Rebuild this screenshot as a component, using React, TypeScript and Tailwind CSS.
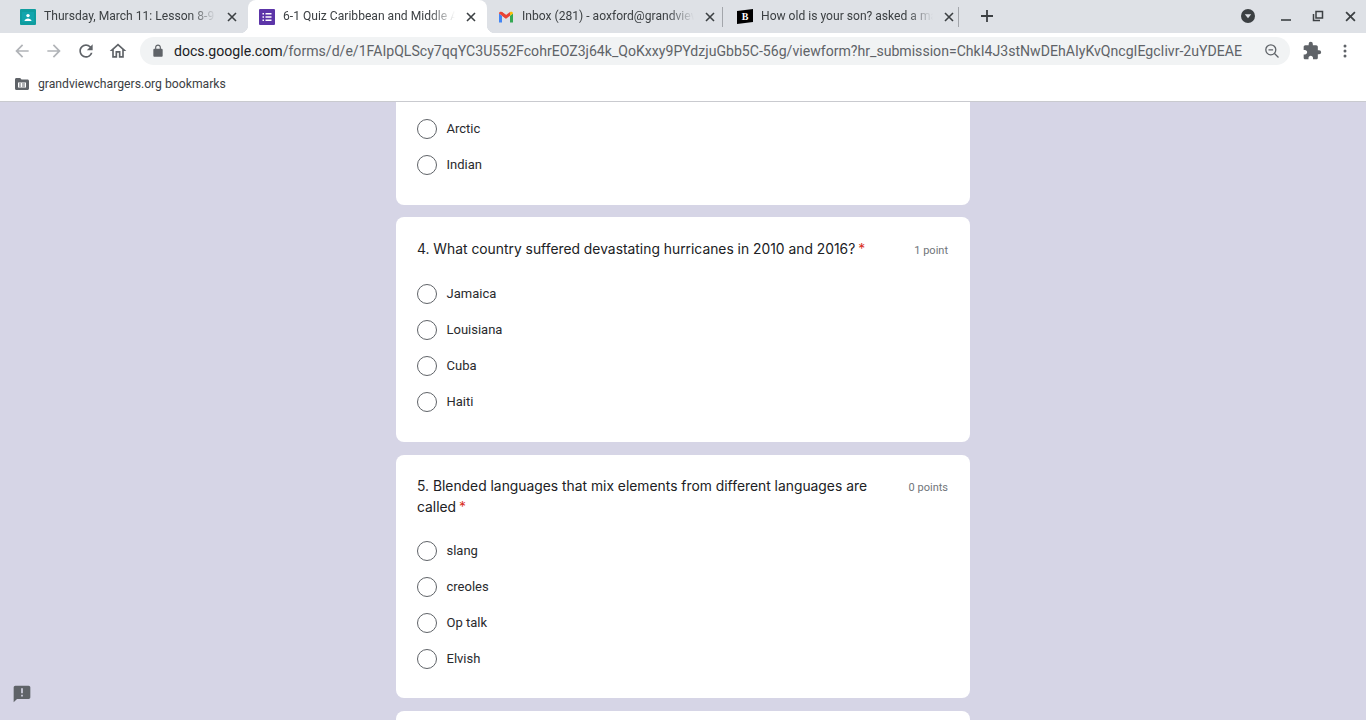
import React from "react";

const tabs = [
  { title: "Thursday, March 11: Lesson 8-9 Review", width: "w-[240px]", icon: "classroom", active: false, pl: "pl-3", sep: false },
  { title: "6-1 Quiz Caribbean and Middle America", width: "w-[239px]", icon: "forms", active: true, pl: "pl-[11px]", sep: false },
  { title: "Inbox (281) - aoxford@grandviewchargers.org", width: "w-[235px]", icon: "gmail", active: false, pl: "pl-[11px]", sep: true },
  { title: "How old is your son? asked a man at the", width: "w-[235px]", icon: "b", active: false, pl: "pl-[14px]", sep: true },
];

const TabIcon = ({ kind }: { kind: string }) => {
  if (kind === "classroom") {
    return (
      <svg width="16" height="16" viewBox="0 0 16 16" className="shrink-0">
        <rect width="16" height="16" rx="1" fill="#0f9d9f" />
        <rect x="2" y="3" width="12" height="10" fill="#12a5ad" />
        <circle cx="8" cy="6.6" r="1.7" fill="#fff" />
        <path d="M4.5 12c0-1.8 2-2.6 3.5-2.6s3.500.8 3.500 2.600z" fill="#fff" />
      </svg>
    );
  }
  if (kind === "forms") {
    return (
      <svg width="16" height="16" viewBox="0 0 16 16" className="shrink-0">
        <rect width="16" height="16" rx="1" fill="#5c35a8" />
        <path d="M3.500 4h1.500v1.500H3.500zM6.500 4h6v1.500h-6zM3.500 7.200h1.500v1.500H3.500zM6.500 7.200h6v1.500h-6zM3.500 10.400h1.500v1.500H3.500zM6.500 10.400h6v1.500h-6z" fill="#fff" />
      </svg>
    );
  }
  if (kind === "gmail") {
    return (
      <svg width="16" height="16" viewBox="0 0 16 16" className="shrink-0">
        <path d="M1 13.500V4.500l3 2.200v6.800z" fill="#4285f4" />
        <path d="M12 13.500V6.700l3-2.200v9z" fill="#34a853" />
        <path d="M1 4.500C1 2.800 2.800 2.200 4 3.100L8 6.100v3.300L1 4.500z" fill="#ea4335" />
        <path d="M4 3.100l4 3 4-3v3.600L8 9.700 4 6.700z" fill="#ea4335" />
        <path d="M12 3.100c1.200-.9 3-.3 3 1.400l-3 2.200z" fill="#fbbc04" />
      </svg>
    );
  }
  return (
    <span className="flex h-[15px] w-4 shrink-0 items-center justify-center bg-black font-['Liberation_Serif',serif] text-[10px] font-bold leading-none text-white [clip-path:polygon(0_14%,100%_0,100%_86%,0_100%)]">
      B
    </span>
  );
};

const CloseIcon = ({ size = 10 }: { size?: number }) => (
  <svg width={size} height={size} viewBox="0 0 10 10" className="shrink-0">
    <path d="M1 1l8 8M9 1l-8 8" stroke="#3c4043" strokeWidth="1.600" fill="none" />
  </svg>
);

const ChromeIcon = ({ d, color = "#5f6368", size = 20 }: { d: string; color?: string; size?: number }) => (
  <svg width={size} height={size} viewBox="0 0 24 24" fill={color} className="shrink-0">
    <path d={d} />
  </svg>
);

const Radio = () => (
  <span className="h-5 w-5 shrink-0 rounded-full border-[1.5px] border-[#5f6368]" />
);

const Option = ({ label }: { label: string }) => (
  <div className="flex h-9 items-center gap-[9.5px]">
    <Radio />
    <span className="text-[13px] text-[#292a2d]">{label}</span>
  </div>
);

const Question = ({ title, points }: { title: React.ReactNode; points: string }) => (
  <div className="flex items-start justify-between">
    <div className="w-[460px] font-['Inter',sans-serif] text-[13.85px] leading-[21px] text-[#202124]">{title}</div>
    <div className="pt-px text-[11px] leading-[21px] text-[#70757a]">{points}</div>
  </div>
);

const Star = () => <span className="ml-[3px] text-[#d93025]">*</span>;

export default function App() {
  return (
    <div className="relative flex h-screen w-full flex-col overflow-hidden bg-[#d6d5e6] font-['Roboto',sans-serif]">
      {/* Tab strip */}
      <div className="flex h-[33px] shrink-0 items-center bg-[#dee1e6] pl-2">
        {tabs.map((tab) => (
          <React.Fragment key={tab.title}>
            <div
              className={`relative flex h-full items-center gap-2 ${tab.width} ${tab.pl} ${
                tab.active ? "rounded-t-lg bg-white" : ""
              }`}
            >
              {tab.active && (
                <>
                  <span className="absolute bottom-0 left-[-8px] h-2 w-2 bg-[radial-gradient(circle_at_0_0,transparent_8px,#fff_8.500px)]" />
                  <span className="absolute bottom-0 right-[-8px] h-2 w-2 bg-[radial-gradient(circle_at_100%_0,transparent_8px,#fff_8.500px)]" />
                </>
              )}
              <TabIcon kind={tab.icon} />
              <div className="w-[172px] overflow-hidden whitespace-nowrap text-[12.1px] text-[#3c4043] [mask-image:linear-gradient(to_right,#000_85%,transparent)]">
                {tab.title}
              </div>
              <span className="ml-[3px]">
                <CloseIcon />
              </span>
            </div>
            {tab.sep && <span className="h-5 w-px shrink-0 bg-[#a3a6ab]" />}
          </React.Fragment>
        ))}
        <div className="ml-[21px] flex h-full items-center pb-px">
          <svg width="14" height="14" viewBox="0 0 14 14">
            <path d="M7 1v12M1 7h12" stroke="#3c4043" strokeWidth="1.800" />
          </svg>
        </div>
        <div className="ml-auto flex h-full items-center pb-px pr-[10px]">
          <svg width="16" height="16" viewBox="0 0 16 16" className="mr-[24px]">
            <circle cx="8" cy="8" r="7" fill="#3c4043" />
            <path d="M4.800 6.200h6.400L8 10.200z" fill="#dee1e6" />
          </svg>
          <svg width="12" height="12" viewBox="0 0 12 12" className="mr-[20px]">
            <path d="M1 10h10" stroke="#3c4043" strokeWidth="1.600" />
          </svg>
          <svg width="12" height="12" viewBox="0 0 12 12" className="mr-[21px]">
            <path d="M4 1.500h6.500V8H4zM1.500 4v6.500H8" stroke="#3c4043" strokeWidth="1.500" fill="none" />
          </svg>
          <CloseIcon size={11} />
        </div>
      </div>

      {/* Toolbar */}
      <div className="flex h-[36px] shrink-0 items-center bg-white pl-3">
        <div className="flex items-center gap-3">
          <ChromeIcon color="#b1b4b8" d="M20 11H7.830l5.590-5.590L12 4l-8 8 8 8 1.410-1.410L7.830 13H20v-2z" />
          <ChromeIcon color="#b1b4b8" d="M12 4l-1.410 1.410L16.170 11H4v2h12.170l-5.580 5.590L12 20l8-8z" />
          <ChromeIcon d="M17.650 6.350A7.958 7.958 0 0 0 12 4c-4.420 0-7.990 3.580-7.990 8s3.570 8 7.990 8c3.730 0 6.840-2.550 7.730-6h-2.080A5.990 5.990 0 0 1 12 18c-3.310 0-6-2.690-6-6s2.690-6 6-6c1.660 0 3.140.69 4.220 1.780L13 11h7V4l-2.350 2.350z" />
          <ChromeIcon d="M12 5.690l5 4.500V18h-2v-6H9v6H7v-7.810l5-4.500M12 3L2 12h3v8h6v-6h2v6h6v-8h3L12 3z" />
        </div>
        <div className="ml-[12px] flex h-[28px] w-[1150px] items-center rounded-full bg-[#f1f3f4] pl-[11px] pr-[10px]">
          <ChromeIcon size={14} d="M18 8h-1V6c0-2.760-2.240-5-5-5S7 3.240 7 6v2H6c-1.100 0-2 .9-2 2v10c0 1.100.9 2 2 2h12c1.100 0 2-.9 2-2V10c0-1.100-.9-2-2-2zM9 6c0-1.660 1.340-3 3-3s3 1.340 3 3v2H9V6z" />
          <span className="ml-[9px] whitespace-nowrap pt-px text-[14.1px] text-[#5f6368]">
            <span className="text-[#202124]">docs.google.com</span>
            /forms/d/e/1FAIpQLScy7qqYC3U552FcohrEOZ3j64k_QoKxxy9PYdzjuGbb5C-56g/viewform?hr_submission=ChkI4J3stNwDEhAIyKvQncgIEgcIivr-2uYDEAE
          </span>
          <svg width="16" height="16" viewBox="0 0 16 16" className="ml-auto shrink-0" fill="none" stroke="#5f6368" strokeWidth="1.300">
            <circle cx="6.800" cy="6.800" r="5" />
            <path d="M10.500 10.500l4 4M4.500 6.800h4.600" />
          </svg>
        </div>
        <div className="ml-[12px]">
          <ChromeIcon d="M20.500 11H19V7c0-1.100-.9-2-2-2h-4V3.500a2.500 2.500 0 0 0-5 0V5H4c-1.100 0-1.990.9-1.990 2v3.800H3.500c1.490 0 2.700 1.210 2.700 2.700s-1.210 2.700-2.700 2.700H2V20c0 1.100.9 2 2 2h3.800v-1.500c0-1.490 1.210-2.700 2.700-2.700 1.490 0 2.700 1.210 2.700 2.700V22H17c1.100 0 2-.9 2-2v-4h1.500a2.500 2.500 0 0 0 0-5z" />
        </div>
        <div className="ml-[21px]">
          <svg width="4" height="14" viewBox="0 0 4 14" fill="#5f6368">
            <circle cx="2" cy="2" r="1.500" />
            <circle cx="2" cy="7" r="1.500" />
            <circle cx="2" cy="12" r="1.500" />
          </svg>
        </div>
      </div>

      {/* Bookmarks bar */}
      <div className="flex h-[33px] shrink-0 items-center gap-[9px] border-b border-[#c9cacf] bg-white pb-[2px] pl-[15px]">
        <svg width="14" height="12" viewBox="0 0 14 12" className="shrink-0">
          <path d="M0 1.500C0 .7.600 0 1.400 0h3.800l1.300 1.500h6c.8 0 1.500.7 1.500 1.500v7.500c0 .8-.7 1.500-1.500 1.500H1.400C.6 12 0 11.300 0 10.500z" fill="#5f6368" />
          <path d="M3 4.500h8v5H3z" fill="#fff" />
          <path d="M4 5.500h2v1H4zM7 5.500h3v1H7zM4 7.500h2v1H4zM7 7.500h3v1H7z" fill="#5f6368" />
        </svg>
        <span className="text-[12.2px] text-[#3c4043]">grandviewchargers.org bookmarks</span>
      </div>

      {/* Form */}
      <div className="mx-auto flex w-[574px] flex-col gap-[12px]">
        <div className="rounded-b-lg bg-white pb-[22px] pl-[21px] pt-[9px]">
          <Option label="Arctic" />
          <Option label="Indian" />
        </div>

        <div className="rounded-lg bg-white pb-[22px] pl-[21px] pr-[22px] pt-[22px]">
          <Question title={<>4. What country suffered devastating hurricanes in 2010 and 2016?<Star /></>} points="1 point" />
          <div className="mt-[15px]">
            {["Jamaica", "Louisiana", "Cuba", "Haiti"].map((o) => (
              <Option key={o} label={o} />
            ))}
          </div>
        </div>

        <div className="mt-px rounded-lg bg-white pb-[21px] pl-[21px] pr-[22px] pt-[21px]">
          <Question title={<>5. Blended languages that mix elements from different languages are called<Star /></>} points="0 points" />
          <div className="mt-[15px]">
            {["slang", "creoles", "Op talk", "Elvish"].map((o) => (
              <Option key={o} label={o} />
            ))}
          </div>
        </div>

        <div className="mt-px h-[60px] rounded-t-lg bg-white" />
      </div>

      <div className="absolute bottom-[16px] left-[12px]">
        <ChromeIcon size={20} color="#5f6368" d="M20 2H4c-1.100 0-1.990.9-1.990 2L2 22l4-4h14c1.100 0 2-.9 2-2V4c0-1.100-.9-2-2-2zm-7 9h-2V5h2v6zm0 4h-2v-2h2v2z" />
      </div>
    </div>
  );
}
